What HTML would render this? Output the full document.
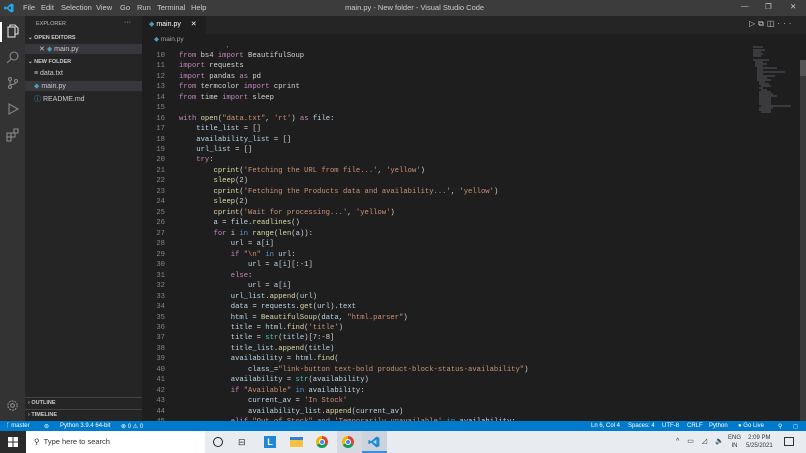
<!DOCTYPE html>
<html><head><meta charset="utf-8"><style>
*{margin:0;padding:0;box-sizing:border-box}
body{width:806px;height:453px;overflow:hidden;background:#1e1e1e;font-family:"Liberation Sans",sans-serif;position:relative}
.abs{position:absolute}
#title{left:0;top:0;width:806px;height:16px;background:#3c3c3c;color:#ccc;font-size:7.5px}
#title span{position:absolute;top:3px}
#act{left:0;top:16px;width:25px;height:405px;background:#333}
#side{left:25px;top:16px;width:117px;height:405px;background:#252526;color:#ccc;font-size:7px}
#side div{position:absolute;white-space:nowrap}
#tabs{left:142px;top:16px;width:664px;height:18px;background:#252526}
#crumb{left:142px;top:34px;width:664px;height:12px;background:#1e1e1e;color:#a0a0a0;font-size:6.5px}
#code{left:142px;top:46px;width:610px;height:375px;overflow:hidden}
#inner{position:absolute;left:0;top:-5.7px;font-family:"Liberation Mono",monospace;font-size:7.2px;color:#d4d4d4}
.l{height:10.47px;line-height:10.47px;white-space:pre;position:relative}
.n{display:inline-block;width:23px;text-align:right;color:#858585;margin-right:14px}
.k{color:#c586c0}.s{color:#ce9178}.f{color:#dcdcaa}.v{color:#bcd8ea}.b{color:#4ec9b0}.c{color:#569cd6}
#status{left:0;top:421px;width:806px;height:10px;background:#007acc;color:#fff;font-size:6px}
#status span{position:absolute;top:1.5px;white-space:nowrap}
#task{left:0;top:431px;width:806px;height:22px;background:#e8e8ec}
</style></head><body>
<div id="title" class="abs">
<svg class="abs" style="left:4px;top:3px" width="10" height="10" viewBox="0 0 10 10"><path d="M7 0.5L9.5 1.5V8.5L7 9.5L2.5 5.5L1 6.8L0.3 6.3V3.7L1 3.2L2.5 4.5L7 0.5ZM7 3L4.2 5L7 7Z" fill="#23a9f2"/></svg>
<span style="left:23px">File</span><span style="left:41px">Edit</span><span style="left:61px">Selection</span><span style="left:96px">View</span><span style="left:120px">Go</span><span style="left:137px">Run</span><span style="left:157px">Terminal</span><span style="left:191px">Help</span>
<span style="left:345px">main.py - New folder - Visual Studio Code</span>
<span style="left:741px;top:1px">—</span><span style="left:765px;top:2px">❐</span><span style="left:790px;top:2px">✕</span>
</div>
<div id="act" class="abs">
<div class="abs" style="left:0;top:6px;width:2px;height:20px;background:#fff"></div>
<svg class="abs" style="left:6px;top:8px" width="14" height="14" viewBox="0 0 14 14" fill="none" stroke="#ddd" stroke-width="1.1"><path d="M4 3V1H9L12 4V10H9"/><rect x="2" y="3" width="7" height="10"/></svg>
<svg class="abs" style="left:6px;top:34px" width="14" height="14" viewBox="0 0 14 14" fill="none" stroke="#888" stroke-width="1.1"><circle cx="8" cy="6" r="4"/><path d="M5 9L1 13"/></svg>
<svg class="abs" style="left:6px;top:60px" width="14" height="14" viewBox="0 0 14 14" fill="none" stroke="#888" stroke-width="1.1"><circle cx="4" cy="3" r="1.5"/><circle cx="4" cy="11" r="1.5"/><circle cx="10" cy="5" r="1.5"/><path d="M4 4.5V9.5M10 6.5C10 9 4 8 4 9.5"/></svg>
<svg class="abs" style="left:6px;top:86px" width="14" height="14" viewBox="0 0 14 14" fill="none" stroke="#888" stroke-width="1.1"><path d="M3 2L12 7L3 12Z"/></svg>
<svg class="abs" style="left:6px;top:112px" width="14" height="14" viewBox="0 0 14 14" fill="none" stroke="#888" stroke-width="1.1"><rect x="1" y="5" width="4" height="4"/><rect x="5" y="5" width="4" height="4"/><rect x="1" y="9" width="4" height="4"/><rect x="8" y="1" width="4" height="4"/></svg>
<svg class="abs" style="left:6px;top:383px" width="13" height="13" viewBox="0 0 14 14" fill="none" stroke="#999" stroke-width="1.1"><circle cx="7" cy="7" r="2"/><circle cx="7" cy="7" r="5" stroke-dasharray="2 1.2"/></svg>
</div>
<div id="side" class="abs">
<div style="left:11px;top:5px;color:#bbb;font-size:5.5px">EXPLORER</div><div style="left:99px;top:3px">···</div>
<div style="left:3px;top:19px;font-weight:bold;font-size:5.5px">⌄ OPEN EDITORS</div>
<div style="left:0;top:28px;width:117px;height:10px;background:#37373d;position:absolute"></div>
<div style="left:14px;top:29px">✕ <span style="color:#519aba">◆</span> main.py</div>
<div style="left:3px;top:43px;font-weight:bold;font-size:5.5px">⌄ NEW FOLDER</div>
<div style="left:9px;top:54px">≡ data.txt</div>
<div style="left:0;top:65px;width:117px;height:10px;background:#37373d;position:absolute"></div>
<div style="left:9px;top:66px"><span style="color:#519aba">◆</span> main.py</div>
<div style="left:9px;top:78px"><span style="color:#519aba">ⓘ</span> README.md</div>
<div style="left:0;top:381px;width:117px;height:1px;background:#444;position:absolute"></div>
<div style="left:3px;top:384px;font-weight:bold;font-size:5.5px">› OUTLINE</div>
<div style="left:0;top:393px;width:117px;height:1px;background:#444;position:absolute"></div>
<div style="left:3px;top:396px;font-weight:bold;font-size:5.5px">› TIMELINE</div>
</div>
<div id="tabs" class="abs">
<div class="abs" style="left:0;top:0;width:64px;height:18px;background:#1e1e1e;color:#fff;font-size:7px;padding:4px 0 0 7px"><span style="color:#519aba">◆</span> main.py <span style="margin-left:8px">✕</span></div>
<div class="abs" style="left:607px;top:3px;color:#ccc;font-size:8px;letter-spacing:3px">▷⧉◫···</div>
</div>
<div id="crumb" class="abs"><span style="position:absolute;left:12px;top:1px"><span style="color:#519aba">◆</span> main.py</span></div>
<div id="code" class="abs"><div id="inner">
<div class="l"><span class="n">9</span><span class="k">from</span> bs4 <span class="k">import</span> Brite</div>
<div class="l"><span class="n">10</span><span class="k">from</span> bs4 <span class="k">import</span> BeautifulSoup</div>
<div class="l"><span class="n">11</span><span class="k">import</span> requests</div>
<div class="l"><span class="n">12</span><span class="k">import</span> pandas <span class="k">as</span> pd</div>
<div class="l"><span class="n">13</span><span class="k">from</span> termcolor <span class="k">import</span> cprint</div>
<div class="l"><span class="n">14</span><span class="k">from</span> time <span class="k">import</span> sleep</div>
<div class="l"><span class="n">15</span></div>
<div class="l"><span class="n">16</span><span class="k">with</span> <span class="f">open</span>(<span class="s">"data.txt"</span>, <span class="s">'rt'</span>) <span class="k">as</span> <span class="v">file</span>:</div>
<div class="l"><span class="n">17</span>    <span class="v">title_list</span> = []</div>
<div class="l"><span class="n">18</span>    <span class="v">availability_list</span> = []</div>
<div class="l"><span class="n">19</span>    <span class="v">url_list</span> = []</div>
<div class="l"><span class="n">20</span>    <span class="k">try</span>:</div>
<div class="l"><span class="n">21</span>        <span class="f">cprint</span>(<span class="s">'Fetching the URL from file...'</span>, <span class="s">'yellow'</span>)</div>
<div class="l"><span class="n">22</span>        <span class="f">sleep</span>(2)</div>
<div class="l"><span class="n">23</span>        <span class="f">cprint</span>(<span class="s">'Fetching the Products data and availability...'</span>, <span class="s">'yellow'</span>)</div>
<div class="l"><span class="n">24</span>        <span class="f">sleep</span>(2)</div>
<div class="l"><span class="n">25</span>        <span class="f">cprint</span>(<span class="s">'Wait for processing...'</span>, <span class="s">'yellow'</span>)</div>
<div class="l"><span class="n">26</span>        <span class="v">a</span> = <span class="v">file</span>.<span class="f">readlines</span>()</div>
<div class="l"><span class="n">27</span>        <span class="k">for</span> <span class="v">i</span> <span class="c">in</span> <span class="f">range</span>(<span class="f">len</span>(<span class="v">a</span>)):</div>
<div class="l"><span class="n">28</span>            <span class="v">url</span> = <span class="v">a</span>[<span class="v">i</span>]</div>
<div class="l"><span class="n">29</span>            <span class="k">if</span> <span class="s">"\n"</span> <span class="c">in</span> <span class="v">url</span>:</div>
<div class="l"><span class="n">30</span>                <span class="v">url</span> = <span class="v">a</span>[<span class="v">i</span>][:-1]</div>
<div class="l"><span class="n">31</span>            <span class="k">else</span>:</div>
<div class="l"><span class="n">32</span>                <span class="v">url</span> = <span class="v">a</span>[<span class="v">i</span>]</div>
<div class="l"><span class="n">33</span>            <span class="v">url_list</span>.<span class="f">append</span>(<span class="v">url</span>)</div>
<div class="l"><span class="n">34</span>            <span class="v">data</span> = <span class="v">requests</span>.<span class="f">get</span>(<span class="v">url</span>).<span class="v">text</span></div>
<div class="l"><span class="n">35</span>            <span class="v">html</span> = <span class="f">BeautifulSoup</span>(<span class="v">data</span>, <span class="s">"html.parser"</span>)</div>
<div class="l"><span class="n">36</span>            <span class="v">title</span> = <span class="v">html</span>.<span class="f">find</span>(<span class="s">'title'</span>)</div>
<div class="l"><span class="n">37</span>            <span class="v">title</span> = <span class="b">str</span>(<span class="v">title</span>)[7:-8]</div>
<div class="l"><span class="n">38</span>            <span class="v">title_list</span>.<span class="f">append</span>(<span class="v">title</span>)</div>
<div class="l"><span class="n">39</span>            <span class="v">availability</span> = <span class="v">html</span>.<span class="f">find</span>(</div>
<div class="l"><span class="n">40</span>                <span class="v">class_</span>=<span class="s">"link-button text-bold product-block-status-availability"</span>)</div>
<div class="l"><span class="n">41</span>            <span class="v">availability</span> = <span class="b">str</span>(<span class="v">availability</span>)</div>
<div class="l"><span class="n">42</span>            <span class="k">if</span> <span class="s">"Available"</span> <span class="c">in</span> <span class="v">availability</span>:</div>
<div class="l"><span class="n">43</span>                <span class="v">current_av</span> = <span class="s">'In Stock'</span></div>
<div class="l"><span class="n">44</span>                <span class="v">availability_list</span>.<span class="f">append</span>(<span class="v">current_av</span>)</div>
<div class="l"><span class="n">45</span>            <span class="k">elif</span> <span class="s">"Out of Stock"</span> <span class="k">and</span> <span class="s">'Temporarily unavailable'</span> <span class="c">in</span> <span class="v">availability</span>:</div>
</div></div>
<svg class="abs" style="left:752px;top:46px" width="48" height="70" viewBox="0 0 48 70">
<g stroke-width="0.8" opacity="0.7">
<path d="M1 1h10M1 4h12M1 6h8M1 8h10M1 10h8M1 14h16M3 16h8M3 18h12M3 20h8M5 22h20M5 24h6M5 26h28M5 28h6M5 30h18M5 32h10M5 34h14M7 36h6M7 38h10M9 40h10M7 42h4M9 44h6M7 46h12M7 48h14M7 50h18M7 52h12M7 54h12M7 56h12M7 58h12M9 60h30M7 62h14M7 64h12M9 66h10" stroke="#8a8a9a"/>
</g></svg>
<div class="abs" style="left:800px;top:60px;width:6px;height:16px;background:#555"></div>
<div class="abs" style="left:800px;top:76px;width:6px;height:345px;background:#3a3a3a"></div>
<div id="status" class="abs">
<span style="left:6px">ᚴ master</span><span style="left:44px">⊚</span><span style="left:60px">Python 3.9.4 64-bit</span><span style="left:121px">⊗ 0 ⚠ 0</span>
<span style="left:591px">Ln 6, Col 4</span><span style="left:628px">Spaces: 4</span><span style="left:662px">UTF-8</span><span style="left:687px">CRLF</span><span style="left:709px">Python</span><span style="left:738px">● Go Live</span><span style="left:778px">⚲</span><span style="left:793px">◻</span>
</div>
<div id="task" class="abs">
<div class="abs" style="left:0;top:0;width:26px;height:22px;background:#2b2b2b"></div>
<svg class="abs" style="left:8px;top:6px" width="10" height="10" viewBox="0 0 10 10" fill="#fff"><rect x="0" y="0" width="4.5" height="4.5"/><rect x="5.5" y="0" width="4.5" height="4.5"/><rect x="0" y="5.5" width="4.5" height="4.5"/><rect x="5.5" y="5.5" width="4.5" height="4.5"/></svg>
<div class="abs" style="left:26px;top:0;width:179px;height:22px;background:#fff;color:#333;font-size:7.5px;padding:6px 0 0 8px">⚲ &nbsp;Type here to search</div>
<div class="abs" style="left:205px;top:0;width:601px;height:22px;background:#e8ebef"></div>
<div class="abs" style="left:213px;top:6px;width:10px;height:10px;border:1.5px solid #222;border-radius:50%"></div>
<div class="abs" style="left:238px;top:6px;font-size:9px;color:#333">⊟</div>
<div class="abs" style="left:264px;top:5px;width:12px;height:12px;background:#1e88d6;color:#fff;font-size:9px;font-weight:bold;text-align:center;line-height:12px">L</div>
<div class="abs" style="left:290px;top:6px;width:13px;height:10px;background:#f4c242;border-top:3px solid #3a7bd5"></div>
<div class="abs" style="left:316px;top:5px;width:12px;height:12px;border-radius:50%;background:conic-gradient(#db4437 0 120deg,#0f9d58 120deg 240deg,#f4b400 240deg);"></div><div class="abs" style="left:320px;top:9px;width:4px;height:4px;border-radius:50%;background:#4285f4;outline:1px solid #fff"></div>
<div class="abs" style="left:337px;top:0;width:25px;height:22px;background:#d6dae0"></div>
<div class="abs" style="left:342px;top:5px;width:12px;height:12px;border-radius:50%;background:conic-gradient(#db4437 0 120deg,#0f9d58 120deg 240deg,#f4b400 240deg);"></div><div class="abs" style="left:346px;top:9px;width:4px;height:4px;border-radius:50%;background:#4285f4;outline:1px solid #fff"></div>
<div class="abs" style="left:362px;top:0;width:25px;height:22px;background:#cdd3db;border-bottom:2px solid #3a8ee6"></div>
<svg class="abs" style="left:368px;top:5px" width="12" height="12" viewBox="0 0 10 10"><path d="M7 0.5L9.5 1.5V8.5L7 9.5L2.5 5.5L1 6.8L0.3 6.3V3.7L1 3.2L2.5 4.5L7 0.5ZM7 3L4.2 5L7 7Z" fill="#1a8ad4"/></svg>
<div class="abs" style="left:676px;top:6px;font-size:7px;color:#333;letter-spacing:3px">^ ▭ ◿ 🔈</div>
<div class="abs" style="left:728px;top:3px;font-size:6px;color:#333;line-height:8px;text-align:center">ENG<br>IN</div>
<div class="abs" style="left:746px;top:3px;font-size:6px;color:#333;line-height:8px;text-align:center">2:09 PM<br>5/25/2021</div>
<div class="abs" style="left:784px;top:6px;width:10px;height:9px;border:1px solid #333"></div>
</div>
</body></html>
